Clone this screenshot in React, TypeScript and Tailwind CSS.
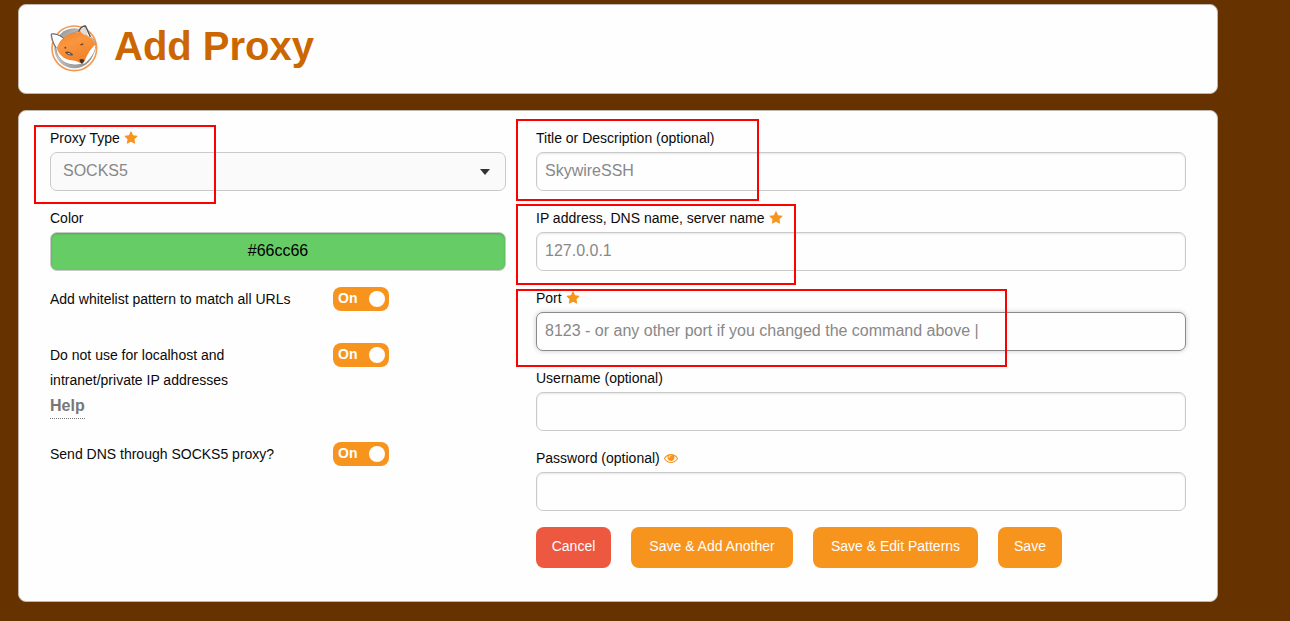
import { useState } from "react";
import type { InputHTMLAttributes, ReactNode } from "react";

function FoxLogo() {
  return (
    <svg viewBox="6 0 150 156" className="h-[52px] w-[50px] shrink-0" role="img" aria-label="FoxyProxy">
      <defs>
        <linearGradient id="disc" x1="0" y1="0" x2="1" y2="1">
          <stop offset="0" stopColor="#858585" />
          <stop offset="0.4" stopColor="#c4c4c4" />
          <stop offset="1" stopColor="#858585" />
        </linearGradient>
        <linearGradient id="fur" x1="0" y1="0" x2="0.4" y2="1">
          <stop offset="0" stopColor="#ee7a20" />
          <stop offset="0.5" stopColor="#f9963f" />
          <stop offset="1" stopColor="#f0832c" />
        </linearGradient>
      </defs>
      <circle cx="79" cy="79" r="67" fill="#fff" stroke="#f39a55" strokeWidth="5" />
      <circle cx="79" cy="79" r="60" fill="url(#disc)" />
      <path d="M9 36 C22 34 36 40 47 49 C60 38 76 31 91 29 C96 18 103 12 113 11 C119 21 123 33 127 43 C138 51 143 60 143 72 C141 92 129 110 109 126 C90 128 66 132 46 116 C31 106 25 92 24 78 C15 66 9 52 9 36Z" fill="#fff" stroke="#777" strokeWidth="2" strokeLinejoin="round" />
      <path d="M38 56 C54 38 74 31 92 31 L110 15 L119 42 C133 48 142 58 142 68 C130 80 119 94 110 118 L102 125 C84 117 66 123 48 113 C35 103 27 90 27 77 C29 69 32 62 38 56Z" fill="url(#fur)" />
      <path d="M142 69 C128 80 117 97 110 122 C128 110 141 91 142 69Z" fill="#fff" />
      <path d="M27 82 C33 98 49 112 65 114 C78 115 90 118 100 125 C77 130 57 127 43 115 C33 105 27 95 27 82Z" fill="#fff" />
      <path d="M14 41 C24 42 32 47 37 55 L29 71 C20 63 15 52 14 41Z" fill="#fafafa" />
      <path d="M97 29 C100 21 105 17 110 16 L118 40 C110 39 102 35 97 29Z" fill="#ddd" />
      <path d="M92 29 C96 19 103 12 112 12 L127 44" fill="none" stroke="#555" strokeWidth="4" strokeLinejoin="round" />
      <path d="M10 37 C12 53 17 66 25 78 M10 36 C22 34 36 40 47 49" fill="none" stroke="#666" strokeWidth="3" />
      <path d="M51 90 C58 86 70 90 76 99 C66 103 55 99 51 90Z" fill="#5d5048" />
      <path d="M58 93 Q64 92 68 97 Q62 98 58 93Z" fill="#d8d8d8" />
      <path d="M96 69 C99 64 103 64 107 65 C106 69 101 72 96 69Z" fill="#7b4b28" />
      <circle cx="52" cy="77" r="3" fill="#80451e" />
      <path d="M94 113 Q102 109 109 114 Q108 122 102 126 Q95 121 94 113Z" fill="#383838" />
    </svg>
  );
}

function Star() {
  return (
    <svg viewBox="0 0 1792 1792" className="size-[14px] fill-[#f7941e]" aria-hidden="true">
      <path d="M1728 647q0 22-26 48l-363 354 86 500q1 7 1 20 0 21-10.500 35.500t-30.500 14.500q-19 0-40-12l-449-236-449 236q-22 12-40 12-21 0-31.500-14.500t-10.500-35.500q0-6 2-20l86-500-364-354q-25-27-25-48 0-37 56-46l502-73 225-455q19-41 49-41t49 41l225 455 502 73q56 9 56 46z" />
    </svg>
  );
}

function Eye() {
  return (
    <svg viewBox="0 0 1792 1792" className="size-[14px] fill-[#f7941e]" aria-hidden="true">
      <path d="M1664 960q-152-236-381-353 61 104 61 225 0 185-131.500 316.500t-316.500 131.500-316.500-131.500-131.500-316.500q0-121 61-225-229 117-381 353 133 205 333.500 326.500t434.500 121.500 434.500-121.500 333.500-326.500zm-720-384q0-20-14-34t-34-14q-125 0-214.500 89.500t-89.500 214.500q0 20 14 34t34 14 34-14 14-34q0-86 61-147t147-61q20 0 34-14t14-34zm848 384q0 34-20 69-140 230-376.500 368.500t-499.500 138.500-499.500-139-376.500-368q-20-35-20-69t20-69q140-229 376.500-368t499.500-139 499.500 139 376.500 368q20 35 20 69z" />
    </svg>
  );
}

function Field({ id, label, icon, children }: { id: string; label: string; icon?: ReactNode; children: ReactNode }) {
  return (
    <div className="relative">
      <div className="flex h-[25px] items-center gap-1 pb-[3px]">
        <label htmlFor={id}>{label}</label>
        {icon}
      </div>
      {children}
    </div>
  );
}

function TextInput({ focused, ...rest }: InputHTMLAttributes<HTMLInputElement> & { focused?: boolean }) {
  const tone = focused
    ? "border-[#8a8a8a] shadow-[0_0_5px_#cacaca]"
    : "border-[#cacaca] shadow-[inset_0_1px_2px_rgba(10,10,10,0.1)]";
  return (
    <input
      {...rest}
      className={`block h-[39px] w-full rounded-[7px] border bg-[#fefefe] px-2 pb-[2px] text-base text-[#888] outline-none ${tone}`}
    />
  );
}

function Highlight({ className }: { className: string }) {
  return <span aria-hidden="true" className={`pointer-events-none absolute border-2 border-[#ff0000] ${className}`} />;
}

function Toggle({ id }: { id: string }) {
  const [on, setOn] = useState(true);
  return (
    <label className={`flex h-6 w-14 cursor-pointer items-center justify-between rounded-[8px] pr-1 pl-[5px] text-sm font-bold text-white ${on ? "bg-[#f7941e]" : "flex-row-reverse bg-[#999]"}`}>
      <input id={id} type="checkbox" checked={on} onChange={() => setOn(!on)} className="sr-only" />
      <span aria-hidden="true" className="pb-[2px]">{on ? "On" : "Off"}</span>
      <span aria-hidden="true" className="size-4 rounded-full bg-white" />
    </label>
  );
}

const button = "h-[41px] rounded-[8px] pb-[3px] text-sm text-[#fefefe]";
const panel = "rounded-[8px] border border-[#c0b8b0] bg-[#fefefe] px-[31px]";

export default function App() {
  return (
    <div className="flex min-h-screen flex-col gap-4 bg-[#663300] pt-1 pr-[72px] pb-5 pl-[18px] font-['Liberation_Sans',Arial,sans-serif] text-sm leading-[25px] text-[#0a0a0a]">
      <header className={`flex items-center gap-[14px] pt-[17px] pb-[19px] ${panel}`}>
        <FoxLogo />
        <h1 className="pb-[5px] text-[40px] leading-[46px] font-bold text-[#cc6600]">Add Proxy</h1>
      </header>

      <form className={`grid grid-cols-[456fr_650fr] gap-[30px] pt-4 pb-[33px] ${panel}`} onSubmit={(e) => e.preventDefault()}>
        <div className="flex flex-col gap-4">
          <Field id="type" label="Proxy Type" icon={<Star />}>
            <div className="relative">
              <select id="type" className="block h-[39px] w-full appearance-none rounded-[7px] border border-[#cacaca] bg-[#fafafa] px-3 pb-[2px] text-base text-[#888]">
                <option>SOCKS5</option>
                <option>SOCKS4</option>
                <option>HTTP</option>
              </select>
              <svg viewBox="0 0 10 6" className="pointer-events-none absolute top-[17px] right-4 h-[6px] w-[10px] fill-[#333]" aria-hidden="true">
                <path d="M0 0h10L5 6z" />
              </svg>
            </div>
            <Highlight className="-top-[2px] -left-4 h-[79px] w-[182px]" />
          </Field>
          <Field id="color" label="Color">
            <input
              id="color"
              defaultValue="#66cc66"
              className="block h-[39px] w-full rounded-[7px] border border-[#cacaca] bg-[#66cc66] px-2 pb-[2px] text-center text-base text-black shadow-[inset_0_1px_2px_rgba(10,10,10,0.2)]"
            />
          </Field>
          <div className="grid grid-cols-[283px_auto] items-start justify-start">
            <label htmlFor="whitelist" className="mb-[31px]">Add whitelist pattern to match all URLs</label>
            <Toggle id="whitelist" />
            <div className="mb-[23px] max-w-[220px]">
              <label htmlFor="local" className="block">Do not use for localhost and intranet/private IP addresses</label>
              <a href="#help" className="inline-block border-b border-dotted border-[#777] text-base leading-[25px] font-bold text-[#777]">Help</a>
            </div>
            <Toggle id="local" />
            <label htmlFor="dns">Send DNS through SOCKS5 proxy?</label>
            <Toggle id="dns" />
          </div>
        </div>

        <div className="flex flex-col gap-4">
          <Field id="title" label="Title or Description (optional)">
            <TextInput id="title" defaultValue="SkywireSSH" />
            <Highlight className="-top-2 -left-5 h-[82px] w-[243px]" />
          </Field>
          <Field id="host" label="IP address, DNS name, server name" icon={<Star />}>
            <TextInput id="host" defaultValue="127.0.0.1" />
            <Highlight className="-top-[3px] -left-5 h-[81px] w-[280px]" />
          </Field>
          <Field id="port" label="Port" icon={<Star />}>
            <TextInput id="port" focused defaultValue="8123 - or any other port if you changed the command above |" />
            <Highlight className="top-[2px] -left-5 h-[78px] w-[491px]" />
          </Field>
          <Field id="user" label="Username (optional)">
            <TextInput id="user" />
          </Field>
          <Field id="password" label="Password (optional)" icon={<button type="button" aria-label="Show password"><Eye /></button>}>
            <TextInput id="password" type="password" />
          </Field>
          <div className="flex gap-5">
            <button type="button" className={`min-w-[75px] bg-[#ec5840] ${button}`}>Cancel</button>
            <button type="submit" className={`min-w-[162px] bg-[#f7941e] ${button}`}>Save &amp; Add Another</button>
            <button type="submit" className={`min-w-[165px] bg-[#f7941e] ${button}`}>Save &amp; Edit Patterns</button>
            <button type="submit" className={`min-w-16 bg-[#f7941e] ${button}`}>Save</button>
          </div>
        </div>
      </form>
    </div>
  );
}
